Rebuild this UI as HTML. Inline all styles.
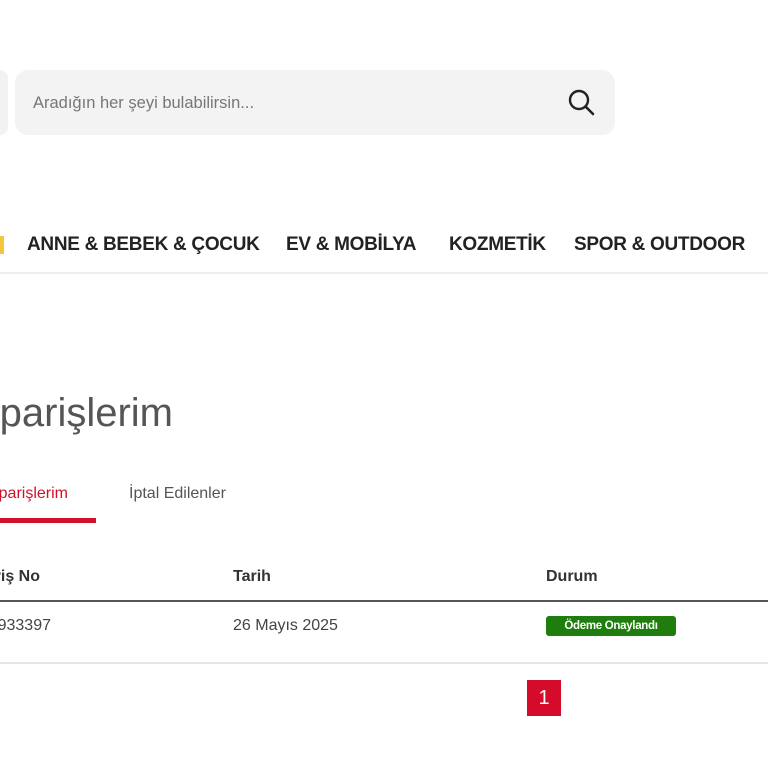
<!DOCTYPE html>
<html><head><meta charset="utf-8"><style>
html,body{margin:0;width:768px;height:768px;overflow:hidden}
body{background:#fff;position:relative;font-family:"Liberation Sans",sans-serif}
.a{position:absolute;white-space:nowrap}
.nav{font-weight:bold;font-size:19px;color:#222;top:234px;letter-spacing:-0.3px}
</style></head><body>
<div class="a" style="left:0;top:70px;width:8px;height:65px;background:#f2f2f2;border-radius:0 8px 8px 0"></div>
<div class="a" style="left:15px;top:70px;width:600px;height:65px;background:#f3f3f3;border-radius:13px"></div>
<div class="a" style="left:33px;top:94px;font-size:16.5px;color:#777">Aradığın her şeyi bulabilirsin...</div>
<svg class="a" style="left:566px;top:87px" width="30" height="30" viewBox="0 0 30 30"><circle cx="13" cy="13" r="9" fill="none" stroke="#222" stroke-width="2.4"/><line x1="19.5" y1="19.5" x2="27" y2="27" stroke="#222" stroke-width="2.6" stroke-linecap="round"/></svg>
<div class="a" style="left:0;top:236px;width:4px;height:18px;background:#f5c542"></div>
<div class="a nav" style="left:27px">ANNE &amp; BEBEK &amp; ÇOCUK</div>
<div class="a nav" style="left:286px">EV &amp; MOBİLYA</div>
<div class="a nav" style="left:449px">KOZMETİK</div>
<div class="a nav" style="left:574px">SPOR &amp; OUTDOOR</div>
<div class="a" style="left:0;top:272px;width:768px;height:2px;background:#eee"></div>
<div class="a" style="right:595px;top:391px;font-size:40px;color:#555">Siparişlerim</div>
<div class="a" style="right:700px;top:485px;font-size:16px;color:#d0112b">Siparişlerim</div>
<div class="a" style="left:0;top:518px;width:96px;height:5px;background:#d0112b"></div>
<div class="a" style="left:129px;top:485px;font-size:16px;color:#555">İptal Edilenler</div>
<div class="a" style="right:728px;top:568px;font-size:16px;font-weight:bold;color:#333">Sipariş No</div>
<div class="a" style="left:233px;top:568px;font-size:16px;font-weight:bold;color:#333">Tarih</div>
<div class="a" style="left:546px;top:568px;font-size:16px;font-weight:bold;color:#333">Durum</div>
<div class="a" style="left:0;top:600px;width:768px;height:2px;background:#555"></div>
<div class="a" style="right:717px;top:617px;font-size:16px;color:#444">1933397</div>
<div class="a" style="left:233px;top:617px;font-size:16px;color:#444">26 Mayıs 2025</div>
<div class="a" style="left:546px;top:616px;width:130px;height:20px;background:#1e7d0c;border-radius:3px;color:#fff;font-weight:bold;font-size:11.5px;line-height:20px;text-align:center;letter-spacing:-0.3px">Ödeme Onaylandı</div>
<div class="a" style="left:0;top:662px;width:768px;height:2px;background:#e6e6e6"></div>
<div class="a" style="left:527px;top:680px;width:34px;height:36px;background:#d50b2b;color:#fff;font-size:20px;line-height:36px;text-align:center">1</div>
</body></html>
